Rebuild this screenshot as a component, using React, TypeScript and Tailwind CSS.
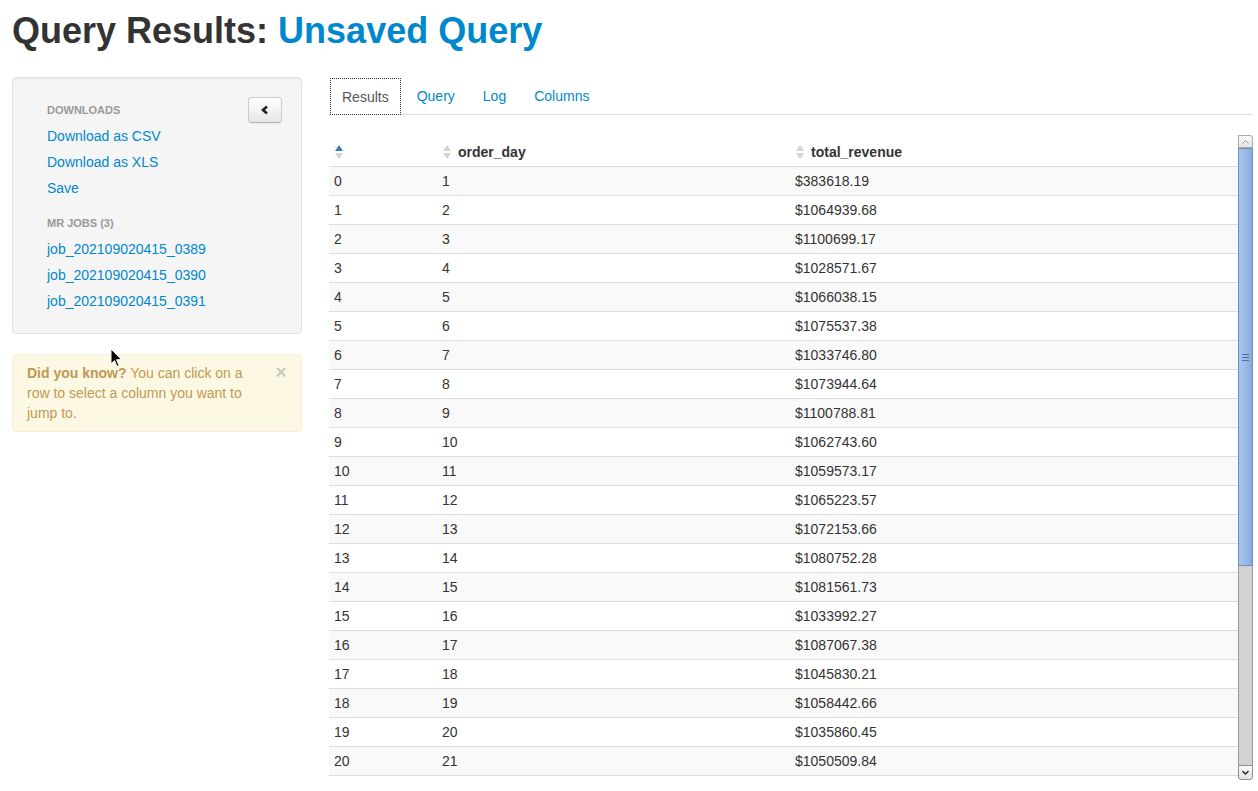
const rows: [number, number, string][] = [
  [0, 1, "$383618.19"],
  [1, 2, "$1064939.68"],
  [2, 3, "$1100699.17"],
  [3, 4, "$1028571.67"],
  [4, 5, "$1066038.15"],
  [5, 6, "$1075537.38"],
  [6, 7, "$1033746.80"],
  [7, 8, "$1073944.64"],
  [8, 9, "$1100788.81"],
  [9, 10, "$1062743.60"],
  [10, 11, "$1059573.17"],
  [11, 12, "$1065223.57"],
  [12, 13, "$1072153.66"],
  [13, 14, "$1080752.28"],
  [14, 15, "$1081561.73"],
  [15, 16, "$1033992.27"],
  [16, 17, "$1087067.38"],
  [17, 18, "$1045830.21"],
  [18, 19, "$1058442.66"],
  [19, 20, "$1035860.45"],
  [20, 21, "$1050509.84"],
]

function SortIcon({ active }: { active?: boolean }) {
  return (
    <svg width="8" height="14" viewBox="0 0 8 14" className="ml-px mr-[7px] shrink-0">
      <polygon points="0,6 4,0 8,6" fill={active ? "#3a7dbd" : "#d4d4d4"} />
      <polygon points="0,8 4,14 8,8" fill="#d4d4d4" />
    </svg>
  )
}

function Scrollbar() {
  return (
    <div className="w-[15px] h-full flex flex-col shrink-0">
      <div className="h-[13px] border border-[#a9a9a9] rounded-tr-[3px] bg-gradient-to-b from-[#fbfbfb] to-[#e4e4e4] flex items-center justify-center">
        <svg width="7" height="4" viewBox="0 0 7 4">
          <polyline points="0.5,3.5 3.5,0.5 6.5,3.5" fill="none" stroke="#9a9a9a" strokeWidth="1" />
        </svg>
      </div>
      <div className="h-[418px] border border-[#6f8fbf] bg-gradient-to-r from-[#a8c4ea] via-[#9bbbe6] to-[#86a9d8] flex items-center justify-center">
        <div className="flex flex-col gap-[2px]">
          <div className="w-[7px] h-px bg-[#4f6f9f]" />
          <div className="w-[7px] h-px bg-[#4f6f9f]" />
          <div className="w-[7px] h-px bg-[#4f6f9f]" />
        </div>
      </div>
      <div className="flex-1 border-x border-[#9c9c9c] bg-[#d3d2d0]" />
      <div className="h-[15px] border border-[#8f8f8f] rounded-b-[3px] bg-gradient-to-b from-[#fafafa] to-[#e2e2e2] flex items-center justify-center">
        <svg width="7" height="5" viewBox="0 0 7 5">
          <polyline points="0.5,1 3.5,4 6.5,1" fill="none" stroke="#222" strokeWidth="1.4" />
        </svg>
      </div>
    </div>
  )
}

export default function App() {
  return (
    <div className="relative min-h-[791px] bg-white text-[#333] text-[14px] leading-[20px] font-['Liberation_Sans',Arial,sans-serif] pl-[12px] pr-[5px]">
      <h1 className="pt-[11px] mb-[26px] text-[36px] leading-[40px] font-bold">
        Query Results: <span className="text-[#0088cc]">Unsaved Query</span>
      </h1>

      <div className="flex gap-[27px] items-start">
        <div className="w-[290px] shrink-0">
          <div className="bg-[#f5f5f5] border border-[#e3e3e3] rounded-[4px] shadow-[inset_0_1px_1px_rgba(0,0,0,0.05)] px-[19px] py-[19px] flex justify-between items-start">
            <ul>
              <li className="px-[15px] py-[3px] text-[11px] font-bold uppercase text-[#999]">Downloads</li>
              <li className="px-[15px] py-[3px] text-[#0088cc]">Download as CSV</li>
              <li className="px-[15px] py-[3px] text-[#0088cc]">Download as XLS</li>
              <li className="px-[15px] py-[3px] text-[#0088cc]">Save</li>
              <li className="mt-[9px] px-[15px] py-[3px] text-[11px] font-bold uppercase text-[#999]">MR Jobs (3)</li>
              <li className="px-[15px] py-[3px] text-[#0088cc]">job_202109020415_0389</li>
              <li className="px-[15px] py-[3px] text-[#0088cc]">job_202109020415_0390</li>
              <li className="px-[15px] py-[3px] text-[#0088cc]">job_202109020415_0391</li>
            </ul>
            <button className="w-[34px] h-[26px] border border-[#ccc] border-b-[#b3b3b3] rounded-[4px] bg-gradient-to-b from-white to-[#e6e6e6] shadow-[0_1px_2px_rgba(0,0,0,0.05)] flex items-center justify-center">
              <svg width="8" height="10" viewBox="0 0 8 10">
                <polyline points="6,1.5 2,5 6,8.5" fill="none" stroke="#222" strokeWidth="2.6" strokeLinejoin="miter" />
              </svg>
            </button>
          </div>

          <div className="relative mt-[20px] bg-[#fcf8e3] border border-[#fbeed5] rounded-[4px] text-[#c09853] pt-[8px] pb-[8px] pl-[14px] pr-[35px]">
            <span className="absolute right-[14px] top-[7px] text-[20px] leading-[20px] font-bold text-black/20">×</span>
            <p>
              <strong>Did you know?</strong> You can click on a row to select a column you want to jump to.
            </p>
          </div>
        </div>

        <div className="flex-1 pt-px">
          <ul className="flex border-b border-[#ddd]">
            <li className="ml-px mr-[3px] -mb-px h-[37px] px-[11px] flex items-center bg-white border border-dotted border-[#333] text-[#555]">
              Results
            </li>
            <li className="mr-[2px] h-[36px] px-[13px] flex items-center text-[#0088cc]">Query</li>
            <li className="mr-[2px] h-[36px] px-[13px] flex items-center text-[#0088cc]">Log</li>
            <li className="mr-[2px] h-[36px] px-[13px] flex items-center text-[#0088cc]">Columns</li>
          </ul>

          <div className="mt-[20px] h-[645px] flex overflow-hidden">
            <div className="flex-1">
              <div className="flex h-[32px] border-b border-[#ddd] font-bold items-center pt-[2px]">
                <div className="w-[108px] pl-[5px] flex items-center">
                  <SortIcon active />
                </div>
                <div className="w-[353px] pl-[5px] flex items-center">
                  <SortIcon />
                  order_day
                </div>
                <div className="flex-1 pl-[5px] flex items-center">
                  <SortIcon />
                  total_revenue
                </div>
              </div>
              {rows.map(([i, day, rev]) => (
                <div
                  key={i}
                  className={`flex h-[29px] border-b border-[#ddd] items-center ${i % 2 === 0 ? "bg-[#f9f9f9]" : "bg-white"}`}
                >
                  <div className="w-[108px] pl-[5px]">{i}</div>
                  <div className="w-[353px] pl-[5px]">{day}</div>
                  <div className="flex-1 pl-[5px]">{rev}</div>
                </div>
              ))}
            </div>
            <Scrollbar />
          </div>
        </div>
      </div>

      <svg width="13" height="21" viewBox="0 0 13 21" className="absolute left-[110px] top-[348px]">
        <path d="M1,1 L1,16 L4.5,12.5 L7,18.5 L9,17.5 L6.6,11.7 L11.5,11.7 Z" fill="#000" stroke="#fff" strokeWidth="1" />
      </svg>
    </div>
  )
}
